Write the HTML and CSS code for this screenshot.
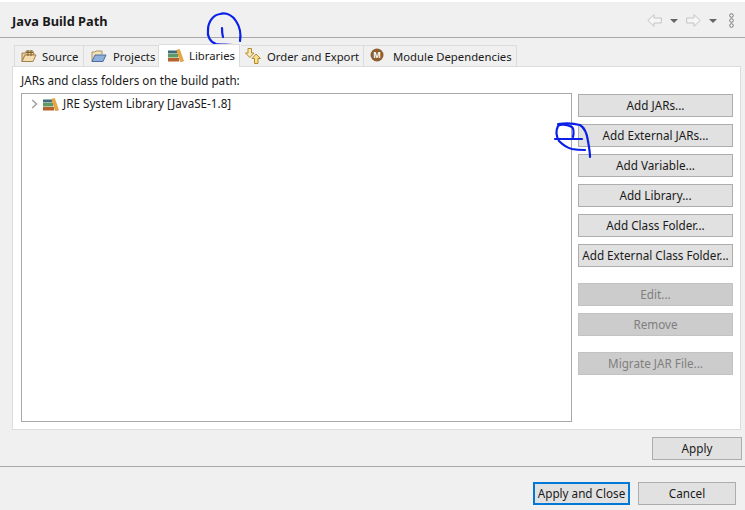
FILE: index.html
```html
<!DOCTYPE html>
<html lang="en">
<head>
<meta charset="utf-8">
<title>Java Build Path</title>
<link rel="stylesheet" href="styles.css">
</head>
<body>
<div class="dialog">
  <header class="head">
    <h1 class="title">Java Build Path</h1>
    <div class="tools">
      <svg class="nav" width="15" height="13" viewBox="0 0 15 13"><path d="M7 .7 .8 6.500 7 12.300V9h7.300V4H7z" fill="#f6f6f6" stroke="#c4c4c4"/></svg>
      <span class="tri"></span>
      <svg class="nav nav2" width="15" height="13" viewBox="0 0 15 13"><path d="M8 .7 14.200 6.500 8 12.300V9H.7V4H8z" fill="#f6f6f6" stroke="#c4c4c4"/></svg>
      <span class="tri"></span>
      <svg class="dots" width="7" height="15" viewBox="0 0 7 15"><g fill="#f4f4f4" stroke="#777" stroke-width="1"><circle cx="3.500" cy="2.500" r="1.800"/><circle cx="3.500" cy="7.500" r="1.800"/><circle cx="3.500" cy="12.500" r="1.800"/></g></svg>
    </div>
  </header>

  <nav class="tabs">
    <div class="tab tab-source">
      <svg width="16" height="14" viewBox="0 0 16 14"><path d="M1 12.500V4h4V2h7v2h1v2H4L1 12.500z" fill="#e8cf9f" stroke="#a5814a"/><path d="M1 12.500 4 6h11l-3 6.500z" fill="#f3dcae" stroke="#a5814a"/><path d="M7 1v6M10 1v6M5 3.500h7" stroke="#7d5f32" fill="none"/></svg>
      <span>Source</span>
    </div>
    <div class="tab tab-projects">
      <svg width="16" height="14" viewBox="0 0 16 14"><path d="M1 12.500V3h3l1-1h6v3" fill="#f2e3b8" stroke="#a99363"/><path d="M1 12.500 4 6h11l-3 6.500z" fill="#8fb0dc" stroke="#4a6c9e"/></svg>
      <span>Projects</span>
    </div>
    <div class="tab tab-libs active">
      <svg width="16" height="13" viewBox="0 0 16 13"><rect x="0" y="1.500" width="9" height="3" fill="#3d6d78"/><rect x="0" y="5" width="10" height="3.500" fill="#5e9a63"/><rect x="0" y="9" width="11" height="3.500" fill="#b5622d"/><path d="M8.500 1.200 11.500.5 15.500 12l-3 .8z" fill="#eba93f" stroke="#bd7d20" stroke-width=".5"/></svg>
      <span>Libraries</span>
    </div>
    <div class="tab tab-order">
      <svg width="16" height="16" viewBox="0 0 16 16"><path d="M3 .5h3.500V5H9L4.800 9.500.5 5H3z" fill="#fbe9b4" stroke="#b38a34"/><path d="M11 6 15.500 10.500H13v5H9.500v-5H7z" fill="#fbe08a" stroke="#b38a34"/></svg>
      <span>Order and Export</span>
    </div>
    <div class="tab tab-module">
      <svg class="m-icon" width="14" height="14" viewBox="0 0 14 14"><circle cx="7" cy="7" r="6.500" fill="#8d5f2e"/><text x="7" y="9.800" text-anchor="middle" class="m-letter">M</text></svg>
      <span>Module Dependencies</span>
    </div>
  </nav>

  <section class="panel">
    <div class="panel-left">
      <p class="label">JARs and class folders on the build path:</p>
      <div class="tree">
        <div class="row">
          <svg class="chev" width="7" height="10" viewBox="0 0 7 10"><path d="M1.200 1 5.500 5 1.200 9" fill="none" stroke="#a0a0a0" stroke-width="1.500"/></svg>
          <svg class="lib" width="16" height="13" viewBox="0 0 16 13"><rect x="0" y="1.500" width="9" height="3" fill="#3d6d78"/><rect x="0" y="5" width="10" height="3.500" fill="#5e9a63"/><rect x="0" y="9" width="11" height="3.500" fill="#b5622d"/><path d="M8.500 1.200 11.500.5 15.500 12l-3 .8z" fill="#eba93f" stroke="#bd7d20" stroke-width=".5"/></svg>
          <span class="row-text">JRE System Library [JavaSE-1.8]</span>
        </div>
      </div>
    </div>
    <div class="side">
      <button class="btn">Add JARs...</button>
      <button class="btn">Add External JARs...</button>
      <button class="btn">Add Variable...</button>
      <button class="btn">Add Library...</button>
      <button class="btn">Add Class Folder...</button>
      <button class="btn">Add External Class Folder...</button>
      <button class="btn off group">Edit...</button>
      <button class="btn off">Remove</button>
      <button class="btn off group2">Migrate JAR File...</button>
    </div>
  </section>

  <div class="apply-row"><button class="btn apply">Apply</button></div>
  <footer class="foot">
    <button class="btn primary">Apply and Close</button>
    <button class="btn cancel">Cancel</button>
  </footer>

  <svg class="ink" width="745" height="510" viewBox="0 0 745 510">
    <g fill="none" stroke="#0a1fe8" stroke-width="2.200" stroke-linecap="round" stroke-linejoin="round">
      <path d="M237 46C232 44 222 45 216 44C210 42 207 36 208 30C208 22 213 15 220 14C227 12 233 16 236 21C240 27 241 35 240 41"/>
      <path d="M222 28C222 31 222 34 223 37"/>
      <path d="M555 139H582"/>
      <path d="M573 137C574 132 574 129 572 127C567 124 560 124 558 126C556 130 556 136 559 141C563 145 568 148 572 149C577 150 581 150 585 150"/>
      <path d="M558 124C565 123 573 123 580 125C585 128 587 134 588 141C589 147 590 152 590 157"/>
    </g>
  </svg>
</div>
</body>
</html>
```
FILE: styles.css
```css
* { box-sizing: border-box; }
html, body { margin: 0; padding: 0; }
body { width: 745px; height: 510px; overflow: hidden; background: #f0f0f0; }
.dialog {
  position: relative;
  width: 745px;
  height: 510px;
  display: flex;
  flex-direction: column;
  background: #f0f0f0;
  border-top: 2px solid #fff;
  font-family: "Noto Sans", "Open Sans", sans-serif;
  font-size: 11.7px;
  color: #1a1a1a;
}
.head {
  height: 36px;
  flex: none;
  display: flex;
  align-items: center;
  justify-content: space-between;
  padding: 2px 10px 0 12px;
  border-bottom: 1px solid #a8a8a8;
}
.title { margin: 0; font-size: 12.800px; font-weight: 700; color: #1a1a1a; }
.tools { display: flex; align-items: center; }
.nav { display: block; }
.nav2 { margin-left: 8px; }
.tri {
  width: 0; height: 0;
  margin-left: 8px;
  border-left: 4px solid transparent;
  border-right: 4px solid transparent;
  border-top: 4px solid #666;
}
.dots { margin-left: 11px; }

.tabs {
  display: flex;
  align-items: flex-end;
  height: 28px;
  flex: none;
  padding-left: 14px;
}
.tab {
  display: flex;
  align-items: center;
  height: 21px;
  background: #f0f0f0;
  border: 1px solid #dcdcdc;
  border-bottom: 0;
  border-left: 0;
  font-size: 11.300px;
  white-space: nowrap;
}
.tab-source { width: 70px; padding-left: 6px; gap: 5px; border-left: 1px solid #dcdcdc; }
.tab-projects { width: 75px; padding-left: 7px; gap: 6px; }
.tab-libs { width: 81px; padding-left: 9px; gap: 5px; }
.tab-order { width: 123px; padding-left: 4px; gap: 6px; margin-left: 1px; }
.tab-module { width: 153px; padding-left: 6px; gap: 9px; }
.m-icon { margin-bottom: 3px; }
.active {
  height: 23px;
  background: #fff;
  border-bottom: 0;
  position: relative;
  z-index: 1;
  margin-bottom: -1px;
  padding-bottom: 2px;
}
.m-letter { font-size: 8px; font-weight: 700; fill: #fff; font-family: "Noto Sans", sans-serif; }

.panel {
  height: 364px;
  flex: none;
  margin: 0 4px 0 12px;
  background: #fff;
  border: 1px solid #dcdcdc;
  display: flex;
  padding: 0 7px 0 8px;
}
.panel-left { width: 551px; flex: none; display: flex; flex-direction: column; }
.label { margin: 0; height: 26px; line-height: 27px; white-space: nowrap; }
.tree {
  width: 551px;
  height: 329px;
  border: 1px solid #a8a8a8;
}
.row { display: flex; align-items: center; height: 20px; padding-left: 9px; white-space: nowrap; }
.chev { margin-right: 5px; }
.lib { margin-right: 4px; }
.row-text { margin-bottom: 2px; }

.side { width: 155px; margin-left: 6px; padding-top: 27px; display: flex; flex-direction: column; }
.btn {
  display: block;
  height: 23px;
  padding: 0 0 2px;
  font: inherit;
  color: #1a1a1a;
  background: #e1e1e1;
  border: 1px solid #adadad;
  text-align: center;
  white-space: nowrap;
}
.side .btn { width: 155px; margin-bottom: 7px; }
.side .group { margin-top: 9px; }
.side .group2 { margin-top: 9px; }
.off { background: #cccccc; border-color: #c2c2c2; color: #7f7f7f; }

.apply-row { flex: none; height: 37px; display: flex; justify-content: flex-end; align-items: flex-start; padding: 7px 3px 0 0; border-bottom: 1px solid #a8a8a8; }
.apply { width: 90px; }
.foot { flex: none; display: flex; justify-content: flex-end; gap: 8px; padding: 15px 9px 0 0; }
.primary { width: 97px; border: 2px solid #0078d7; }
.cancel { width: 98px; }

.ink { position: absolute; left: 0; top: -2px; pointer-events: none; }
```
